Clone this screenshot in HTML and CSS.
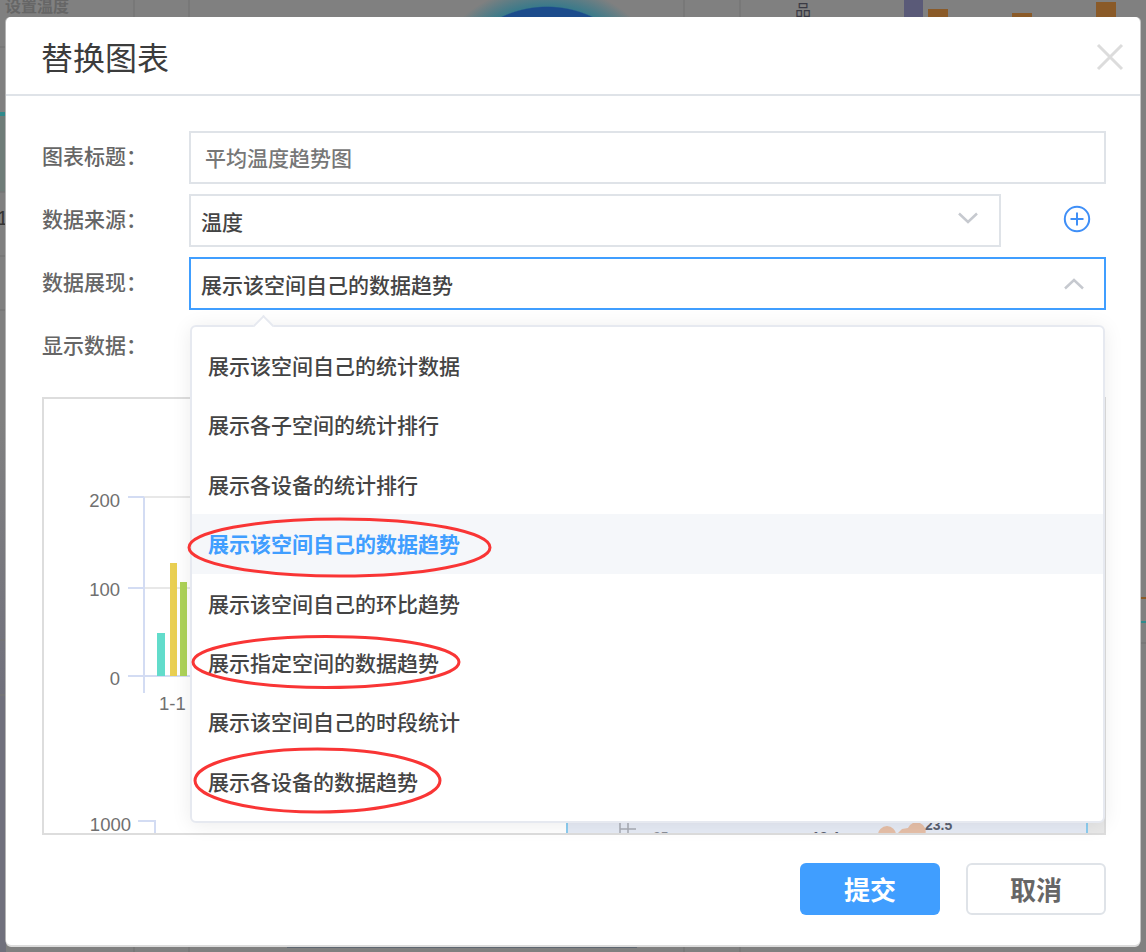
FILE: index.html
```html
<!DOCTYPE html>
<html lang="zh-CN">
<head>
<meta charset="utf-8">
<title>替换图表</title>
<link rel="stylesheet" href="styles.css">
</head>
<body>
<div class="stage">
  <svg class="backdrop" width="1146" height="952" viewBox="0 0 1146 952">
    <defs>
      <radialGradient id="glow" cx="547" cy="113" r="128" gradientUnits="userSpaceOnUse">
        <stop offset="0.825" stop-color="#1c4c8c"/>
        <stop offset="0.835" stop-color="#3a7a8a"/>
        <stop offset="1" stop-color="#808080"/>
      </radialGradient>
      <linearGradient id="tint" x1="0" y1="420" x2="0" y2="700" gradientUnits="userSpaceOnUse">
        <stop offset="0" stop-color="#808080"/>
        <stop offset="1" stop-color="#70707c"/>
      </linearGradient>
    </defs>
    <rect width="1146" height="952" fill="#808080"/>
    <rect x="0" y="114" width="6" height="78" fill="#6f7c78"/>
    <rect x="0" y="420" width="6" height="532" fill="url(#tint)"/>
    <rect x="0" y="112" width="6" height="4" fill="#2f8a8c"/>
    <circle cx="547" cy="113" r="128" fill="url(#glow)"/>
    <g stroke="#767676" stroke-width="1.5">
      <path d="M134 0V17M189 0V17M684 0V17M740 0V17M134 945V952M189 945V952M684 945V952M740 945V952"/>
      <path d="M0 47H6M0 192H6M0 256H6M0 310H6M0 640H6M0 695H6M1140 643H1146"/>
    </g>
    <rect x="904" y="0" width="19" height="17" fill="#5a5a78"/>
    <rect x="928" y="9" width="20" height="8" fill="#8a5a28"/>
    <rect x="1012" y="13" width="20" height="4" fill="#8a5a28"/>
    <rect x="1096" y="2" width="20" height="15" fill="#8a5a28"/>
    <rect x="287" y="946" width="350" height="2" fill="#5e6670"/>
    <rect x="1140" y="597" width="6" height="2" fill="#8a5a28"/>
    <rect x="1140" y="621" width="6" height="2" fill="#2f8a8c"/>
    <text class="bg-title" x="5" y="12">设置温度</text>
    <text class="bg-digit" x="-3" y="225">1</text>
    <text class="bg-side" x="795" y="16">品</text>
  </svg>

  <section class="modal">
    <header class="modal-head">
      <h1 class="modal-title">替换图表</h1>
      <svg class="close" width="28" height="28" viewBox="0 0 28 28">
        <path d="M2 2L26 26M26 2L2 26" fill="none" stroke="#dcdcdc" stroke-width="3"/>
      </svg>
    </header>

    <div class="modal-body">
      <div class="row">
        <label class="label">图表标题：</label>
        <div class="field field-title">平均温度趋势图</div>
      </div>
      <div class="row">
        <label class="label">数据来源：</label>
        <div class="source">
          <div class="field field-select field-source">
            <span>温度</span>
            <svg class="chev" width="20" height="12" viewBox="0 0 20 12"><path d="M1 1.5L10 10L19 1.5" fill="none" stroke="#c6c9cf" stroke-width="2.5"/></svg>
          </div>
          <svg class="plus" width="28" height="28" viewBox="0 0 28 28">
            <circle cx="14" cy="14" r="12.2" fill="none" stroke="#3f8ff7" stroke-width="2"/>
            <path d="M14 7.5V20.5M7.5 14H20.5" fill="none" stroke="#3f8ff7" stroke-width="2"/>
          </svg>
        </div>
      </div>
      <div class="row">
        <label class="label">数据展现：</label>
        <div class="field field-select field-open">
          <span>展示该空间自己的数据趋势</span>
          <svg class="chev chev-up" width="20" height="12" viewBox="0 0 20 12"><path d="M1 10.5L10 2L19 10.5" fill="none" stroke="#c6c9cf" stroke-width="2.5"/></svg>
          <div class="menu">
            <span class="menu-arrow"></span>
            <ul class="menu-list">
              <li class="menu-item">展示该空间自己的统计数据</li>
              <li class="menu-item">展示各子空间的统计排行</li>
              <li class="menu-item">展示各设备的统计排行</li>
              <li class="menu-item is-selected">展示该空间自己的数据趋势</li>
              <li class="menu-item">展示该空间自己的环比趋势</li>
              <li class="menu-item">展示指定空间的数据趋势</li>
              <li class="menu-item">展示该空间自己的时段统计</li>
              <li class="menu-item">展示各设备的数据趋势</li>
            </ul>
          </div>
        </div>
      </div>
      <div class="row row-plain">
        <label class="label">显示数据：</label>
      </div>

      <div class="preview">
        <svg class="preview-chart" width="1060" height="434" viewBox="44 399 1060 434">
          <g stroke="#e8e8e8" stroke-width="2">
            <path d="M144 497H190M144 588H190"/>
          </g>
          <g stroke="#d3dcf3" stroke-width="2" fill="none">
            <path d="M128 497H144M128 588H144M128 676H192M144 497V693"/>
            <path d="M138 821H155V835"/>
          </g>
          <rect x="157" y="633" width="8" height="43" fill="#62dccb"/>
          <rect x="170" y="563" width="7" height="113" fill="#e9cf52"/>
          <rect x="180" y="582" width="7" height="94" fill="#aed358"/>
          <g class="axis-text" text-anchor="end">
            <text x="120" y="507">200</text>
            <text x="120" y="596">100</text>
            <text x="120" y="685">0</text>
            <text x="131" y="831">1000</text>
          </g>
          <text class="axis-text" x="159" y="710">1-1</text>
          <rect x="1087" y="815" width="17" height="20" fill="#e8e8e8"/>
          <rect x="567" y="815" width="520" height="20" fill="#e6ebf5"/>
          <rect x="566" y="815" width="2" height="20" fill="#8ccdf0"/>
          <rect x="1086" y="815" width="2" height="20" fill="#8ccdf0"/>
          <path d="M620 829H636M628 822V835M620 822V835" stroke="#a8acb4" stroke-width="1.5" fill="none"/>
          <text class="panel-text" x="653" y="842">25</text>
          <text class="panel-text panel-strong" x="812" y="842">18.4</text>
          <path d="M878 835a9 9 0 0 1 18 0zM896 835l6-6 6-1a9 9 0 0 1 17 7z" fill="#e6bfa8"/>
          <text class="panel-text panel-strong" x="925" y="830">23.5</text>
        </svg>
      </div>
    </div>

    <footer class="modal-foot">
      <button class="btn btn-primary" type="button">提交</button>
      <button class="btn btn-default" type="button">取消</button>
    </footer>
  </section>

  <svg class="marks" width="1146" height="952" viewBox="0 0 1146 952">
    <g fill="none" stroke="#f93535" stroke-width="3">
      <ellipse cx="339.5" cy="547.5" rx="150.5" ry="28.5"/>
      <ellipse cx="326" cy="662" rx="133" ry="25.5"/>
      <ellipse cx="317.5" cy="780.5" rx="122.5" ry="31.5"/>
    </g>
  </svg>
</div>
</body>
</html>
```
FILE: styles.css
```css
* { box-sizing: border-box; }
html, body { margin: 0; padding: 0; height: 100%; }
body {
  overflow: hidden;
  font-family: "Noto Sans CJK SC", "Liberation Sans", sans-serif;
  color: #444;
}
.stage {
  position: relative;
  width: 1146px;
  height: 952px;
  padding: 17px 6px 7px;
  display: flex;
  overflow: hidden;
}
.backdrop, .marks { position: absolute; left: 0; top: 0; }
.marks { pointer-events: none; z-index: 5; }
.bg-title { font-size: 16px; font-weight: 700; fill: #666; }
.bg-digit { font: 20px "Liberation Sans", sans-serif; fill: #333; }
.bg-side { font-size: 16px; fill: #3a3a44; }

.modal {
  position: relative;
  flex: 1;
  display: flex;
  flex-direction: column;
  background: #fff;
  border-radius: 5px;
  box-shadow: 0 2px 0 #dcdcdc, 1px 0 0 #c4c4c4, -1px 0 0 #b4b4b4;
}
.modal-head {
  height: 79px;
  flex: none;
  display: flex;
  align-items: center;
  justify-content: space-between;
  padding: 0 16px 0 35px;
  border-bottom: 2px solid #dfe3e8;
}
.modal-title {
  margin: 0;
  font-size: 32px;
  line-height: 1;
  font-weight: 400;
  color: #3c3c3c;
}
.close { position: relative; top: 1px; }

.modal-body {
  flex: 1;
  padding: 35px 34px 0 36px;
  display: flex;
  flex-direction: column;
  gap: 10px;
}
.row {
  display: grid;
  grid-template-columns: 147px 1fr;
  height: 53px;
  align-items: center;
}
.row-plain { height: 52px; margin-bottom: 15px; }
.label {
  font-size: 21px;
  font-weight: 500;
  color: #666;
  line-height: 1;
  position: relative;
  top: -2px;
}
.field {
  height: 53px;
  border: 2px solid #dfe3e8;
  background: #fff;
  font-size: 21px;
  font-weight: 500;
  display: flex;
  align-items: center;
  line-height: 1;
}
.field-title { padding-left: 14px; color: #777; }
.field-select { padding: 2px 20px 0 10px; justify-content: space-between; color: #444; }
.source { display: flex; align-items: center; gap: 62px; }
.source .field { width: 812px; }
.field-source { padding-right: 21px; }
.chev { position: relative; top: -4px; }
.chev-up { top: -1px; }
.plus { position: relative; top: -2px; }
.field-open { position: relative; border-color: #409eff; z-index: 3; }

.menu {
  position: absolute;
  left: -1px;
  top: 66px;
  width: 915px;
  height: 498px;
  padding: 9px 0 0;
  background: #fff;
  border: 2px solid #e6e9f0;
  border-radius: 6px;
  box-shadow: 0 2px 20px rgba(0, 0, 0, 0.08);
}
.menu-arrow {
  position: absolute;
  left: 64px;
  top: -9px;
  width: 15px;
  height: 15px;
  background: #fff;
  border-top: 2px solid #e6e9f0;
  border-left: 2px solid #e6e9f0;
  transform: rotate(45deg);
}
.menu-list { list-style: none; margin: 0; padding: 0; }
.menu-item {
  height: 59.4px;
  line-height: 59.4px;
  padding-left: 16px;
  font-size: 21px;
  font-weight: 500;
  color: #444;
}
.is-selected { background: #f5f7fa; color: #409eff; font-weight: 700; }

.preview {
  height: 438px;
  border: 2px solid #dddddd;
  overflow: hidden;
  flex: none;
}
.preview-chart { display: block; }
.axis-text { font: 18.5px "Liberation Sans", sans-serif; fill: #707070; }
.panel-text { font: 14px "Liberation Sans", sans-serif; fill: #8a8f98; }
.panel-strong { font-weight: 700; fill: #5a6070; }

.modal-foot {
  flex: none;
  display: flex;
  justify-content: flex-end;
  gap: 26px;
  padding: 28px 34px 30px 0;
}
.btn {
  width: 140px;
  height: 52px;
  border-radius: 6px;
  font-family: inherit;
  font-size: 26px;
  font-weight: 700;
  line-height: 1;
  padding: 0;
}
.btn-primary { background: #409eff; border: none; color: #fff; }
.btn-default { background: #fff; border: 2px solid #dfe3e8; color: #666; }
```
